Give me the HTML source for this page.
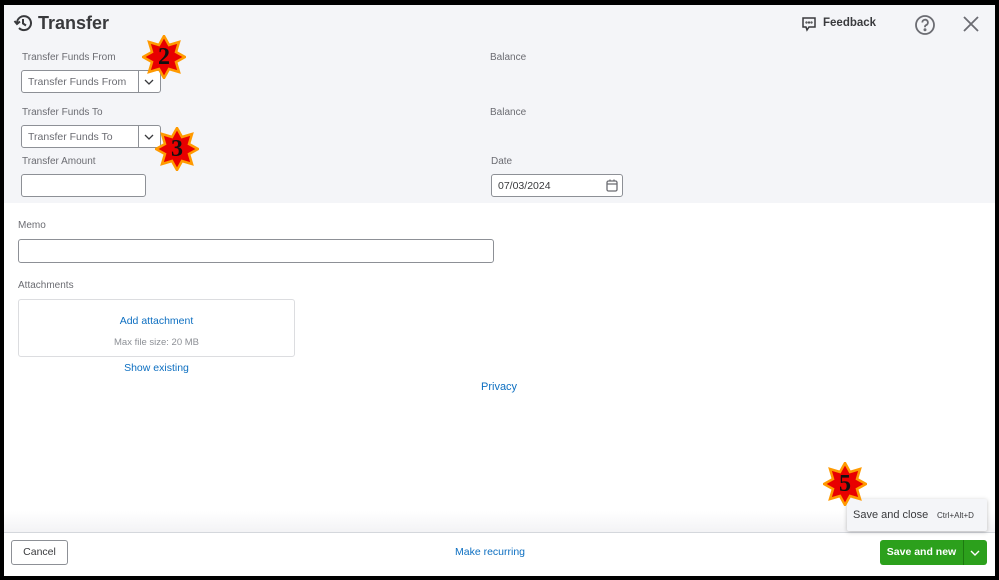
<!DOCTYPE html>
<html><head><meta charset="utf-8"><style>
*{box-sizing:border-box;margin:0;padding:0}
body{width:999px;height:580px;overflow:hidden;background:#000;font-family:"Liberation Sans",sans-serif;position:relative}
.win{position:absolute;left:4px;top:5px;width:991px;height:571px;background:#fff;overflow:hidden}
.grey{position:absolute;left:0;top:0;width:991px;height:198px;background:#f4f5f8}
.a{position:absolute}
.lbl{font-size:10px;color:#6b6c72}
.box{position:absolute;border:1px solid #8d9096;border-radius:3px;background:#fff;font-size:10.5px;color:#6b6c72}
.link{color:#0d6fc1;font-size:10.5px}
.star{position:absolute;width:44px;height:44px}
.star span{position:absolute;left:0;top:0;width:44px;height:44px;text-align:center;line-height:44px;font-family:"Liberation Serif",serif;font-weight:bold;font-size:24px;color:#111}
</style></head><body>
<div class="win">
<div class="grey"></div>
<svg class="a" style="left:9px;top:8px" width="20" height="20" viewBox="0 0 20 20" fill="none" stroke="#393a3d" stroke-width="2"><path d="M4 10a7 7 0 1 1 2 5"/><path d="M1.5 8l2.5 3 3-2.5"/><path d="M10 6v4.5l3 2"/></svg>
<div class="a" style="left:34px;top:8px;font-size:18px;font-weight:bold;color:#393a3d">Transfer</div>
<svg class="a" style="left:797px;top:11px" width="16" height="16" viewBox="0 0 16 16" fill="none" stroke="#393a3d" stroke-width="1.5"><path d="M2 2h12v9H8l-2 3-1-3H2z"/><circle cx="5.5" cy="6.5" r=".4" fill="#393a3d"/><circle cx="8" cy="6.5" r=".4" fill="#393a3d"/><circle cx="10.5" cy="6.5" r=".4" fill="#393a3d"/></svg>
<div class="a" style="left:819px;top:12px;font-size:11.5px;font-weight:bold;color:#393a3d">Feedback</div>
<svg class="a" style="left:910px;top:9px" width="22" height="22" viewBox="0 0 22 22" fill="none" stroke="#6b6c72" stroke-width="1.8"><circle cx="11" cy="11" r="9"/><path d="M8.3 8.5a2.8 2.8 0 1 1 3.8 2.6c-.8.4-1.1.9-1.1 1.7v.5"/><circle cx="11" cy="15.8" r=".6" fill="#6b6c72"/></svg>
<svg class="a" style="left:959px;top:11px" width="16" height="16" viewBox="0 0 16 16" stroke="#6b6c72" stroke-width="1.8"><path d="M1 1l14 14M15 1L1 15"/></svg>

<div class="a lbl" style="left:18px;top:47px">Transfer Funds From</div>
<div class="box" style="left:17px;top:65px;width:140px;height:23px"><span class="a" style="left:6px;top:5px">Transfer Funds From</span><div class="a" style="left:116px;top:0;width:1px;height:21px;background:#8d9096"></div><svg class="a" style="left:122px;top:7px" width="10" height="8" viewBox="0 0 10 8" fill="none" stroke="#393a3d" stroke-width="1.3"><path d="M1 2l4 4 4-4"/></svg></div>
<div class="a lbl" style="left:486px;top:47px">Balance</div>

<div class="a lbl" style="left:18px;top:102px">Transfer Funds To</div>
<div class="box" style="left:17px;top:120px;width:140px;height:23px"><span class="a" style="left:6px;top:5px">Transfer Funds To</span><div class="a" style="left:116px;top:0;width:1px;height:21px;background:#8d9096"></div><svg class="a" style="left:122px;top:7px" width="10" height="8" viewBox="0 0 10 8" fill="none" stroke="#393a3d" stroke-width="1.3"><path d="M1 2l4 4 4-4"/></svg></div>
<div class="a lbl" style="left:486px;top:102px">Balance</div>

<div class="a lbl" style="left:18px;top:151px">Transfer Amount</div>
<div class="box" style="left:17px;top:169px;width:125px;height:23px"></div>
<div class="a lbl" style="left:487px;top:151px">Date</div>
<div class="box" style="left:487px;top:169px;width:132px;height:23px"><span class="a" style="left:6px;top:5px;color:#393a3d">07/03/2024</span><svg class="a" style="left:114px;top:4px" width="12" height="13" viewBox="0 0 12 13" fill="none" stroke="#6b6c72" stroke-width="1.3"><rect x="1" y="2" width="10" height="10" rx="1.5"/><path d="M1 5h10M4 0.5v2M8 0.5v2"/></svg></div>

<div class="a lbl" style="left:14px;top:215px">Memo</div>
<div class="box" style="left:14px;top:234px;width:476px;height:24px"></div>
<div class="a lbl" style="left:14px;top:275px">Attachments</div>
<div class="a" style="left:14px;top:294px;width:277px;height:58px;border:1px solid #dcdde0;border-radius:3px"></div>
<div class="a link" style="left:14px;top:310px;width:277px;text-align:center">Add attachment</div>
<div class="a" style="left:14px;top:332px;width:277px;text-align:center;font-size:9.5px;color:#8d9096">Max file size: 20 MB</div>
<div class="a link" style="left:14px;top:357px;width:277px;text-align:center">Show existing</div>
<div class="a link" style="left:477px;top:376px;font-size:11px">Privacy</div>

<div class="a" style="left:0;top:506px;width:991px;height:21px;background:linear-gradient(#fff,#f3f3f5)"></div>
<div class="a" style="left:0;top:527px;width:991px;height:1px;background:#d4d7dc"></div>
<div class="a" style="left:7px;top:535px;width:57px;height:25px;border:1px solid #8d9096;border-radius:3px;text-align:center;line-height:23px;font-size:10.5px;color:#393a3d">Cancel</div>
<div class="a link" style="left:451px;top:541px">Make recurring</div>
<div class="a" style="left:876px;top:535px;width:107px;height:25px;background:#2ca01c;border-radius:3px"></div>
<div class="a" style="left:876px;top:541px;width:83px;text-align:center;font-size:10.5px;font-weight:bold;color:#fff">Save and new</div>
<div class="a" style="left:959px;top:535px;width:1px;height:25px;background:#1d7a10"></div>
<svg class="a" style="left:966px;top:544px" width="10" height="8" viewBox="0 0 10 8" fill="none" stroke="#fff" stroke-width="1.4"><path d="M1 2l4 4 4-4"/></svg>

<div class="a" style="left:843px;top:494px;width:140px;height:32px;background:#f4f5f8;box-shadow:0 1px 4px rgba(0,0,0,.25);border-radius:2px"></div>
<div class="a" style="left:849px;top:504px;font-size:11px;color:#393a3d">Save and close</div>
<div class="a" style="left:933px;top:506px;font-size:8px;color:#393a3d">Ctrl+Alt+D</div>
</div>

<svg width="0" height="0" style="position:absolute"><defs><polygon id="st" points="22,1 27,10 37,7 34,17 43,22 34,27 37,37 27,34 22,43 17,34 7,37 10,27 1,22 10,17 7,7 17,10"/></defs></svg>
<div class="star" style="left:142px;top:35px"><svg width="44" height="44"><use href="#st" fill="#e80000" stroke="#ff9a00" stroke-width="2.5"/></svg><span>2</span></div>
<div class="star" style="left:155px;top:127px"><svg width="44" height="44"><use href="#st" fill="#e80000" stroke="#ff9a00" stroke-width="2.5"/></svg><span>3</span></div>
<div class="star" style="left:823px;top:462px"><svg width="44" height="44"><use href="#st" fill="#e80000" stroke="#ff9a00" stroke-width="2.5"/></svg><span>5</span></div>
</body></html>
